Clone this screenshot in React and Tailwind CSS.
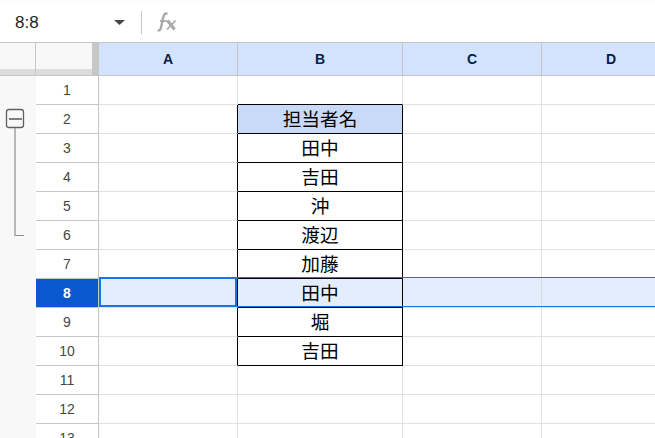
import React from 'react';

const names = { 2: '担当者名', 3: '田中', 4: '吉田', 5: '沖', 6: '渡辺', 7: '加藤', 8: '田中', 9: '堀', 10: '吉田' };
const rows = [1, 2, 3, 4, 5, 6, 7, 8, 9, 10, 11, 12, 13];
const cols = ['A', 'B', 'C', 'D'];

const GridCell = ({ col, row }) => {
    const selected = row === 8;
    const inTable = col === 'B' && names[row];
    const bg = selected ? 'bg-[#e3edfc]' : row === 2 && col === 'B' ? 'bg-[#c9daf8]' : 'bg-white';
    // right edge of column A and bottom of B1 belong to the black table outline
    const right = inTable || (col === 'A' && names[row]) ? 'border-r-black' : selected ? 'border-r-[#d3dbe8]' : 'border-r-[#e1e1e1]';
    const bottom = inTable || (col === 'B' && row === 1) ? 'border-b-black' : row === 7 ? 'border-b-[#e3edfc]' : 'border-b-[#e1e1e1]';
    return (
        <div className={`h-[29px] pt-[3px] border-r border-b ${bg} ${right} ${bottom} flex items-center justify-center text-[18.67px] leading-none text-black`}>
            {inTable ? names[row] : ''}
        </div>
    );
};

const App = () => {
    return (
        <div className="w-[655px] h-[438px] overflow-hidden bg-white font-['Liberation_Sans','Noto_Sans_CJK_JP',sans-serif]">
            <div className="h-[3px] bg-[#f9fbfd]" />
            <div className="h-[39px] flex items-center bg-white">
                <div className="w-[100px] pl-[15px] text-[17px] leading-none text-[#1f1f1f]">8:8</div>
                <svg width="11" height="5" viewBox="0 0 11 5" className="ml-[14px] mb-[1px]">
                    <path d="M0 0h11L5.5 5z" fill="#444746" />
                </svg>
                <div className="ml-[16px] mb-[1px] w-px h-[23px] bg-[#c7c7c7]" />
                <svg width="20" height="20" viewBox="0 0 20 20" fill="none" stroke="#aaaaaa" className="ml-[15px] mb-[1px]">
                    <path d="M10.5 1.8C8 0.6 6.8 2.5 6.3 5L4 15.5C3.5 18 2.2 19 0.6 18" strokeWidth="2.4" />
                    <path d="M3 9H10" strokeWidth="1.8" />
                    <path d="M10.5 8.5L17.5 17.5" strokeWidth="3.2" />
                    <path d="M18.5 8.5L10 17.5" strokeWidth="1.8" />
                </svg>
            </div>
            <div className="flex border-t border-[#c4c7c5]">
                <div className="w-[36px] shrink-0 bg-[#f8f8f8]">
                    <div className="h-[33px] border-r border-b border-[#c4c7c5] flex flex-col justify-end">
                        <div className="h-[6px] bg-[#dcdcdc]" />
                    </div>
                    <svg width="36" height="170" viewBox="0 0 36 170" className="block">
                        <rect x="6.5" y="33.5" width="17" height="18" rx="2.5" fill="#f8f8f8" stroke="#5f5f5f" strokeWidth="1.3" />
                        <path d="M9 43H22" stroke="#808080" strokeWidth="2" />
                        <path d="M15 52V159.5H24" stroke="#8f8f8f" strokeWidth="1.2" fill="none" />
                    </svg>
                </div>
                <div className="flex-1 relative grid grid-cols-[63px_139px_165px_139px_139px] grid-rows-[33px] auto-rows-[29px] content-start">
                    <div className="border-r border-b border-[#c4c7c5] bg-[#f8f8f8] flex justify-end relative">
                        <div className="w-[6px] bg-[#c7c7c7]" />
                        <div className="absolute left-0 right-[6px] bottom-0 h-[6px] bg-[#dcdcdc]" />
                    </div>
                    {cols.map((c) => (
                        <div key={c} className="border-r border-b border-[#c4c7c5] bg-[#d3e3fd] flex items-center justify-center text-[14px] font-bold text-[#041e49]">
                            {c}
                        </div>
                    ))}
                    {rows.map((r) => (
                        <React.Fragment key={r}>
                            <div className={`border-r border-b border-[#c4c7c5] flex items-center justify-center text-[14px] ${r === 8 ? 'bg-[#0b57d0] text-white font-bold' : 'bg-white text-[#444746]'}`}>
                                {r}
                            </div>
                            {cols.map((c) => (
                                <GridCell key={c} col={c} row={r} />
                            ))}
                        </React.Fragment>
                    ))}
                    {/* selection outlines over the grid */}
                    <div className="absolute left-[63px] right-0 top-[234px] h-px bg-[#1a73e8]" />
                    <div className="absolute left-[63px] right-0 top-[263px] h-px bg-[#1a73e8]" />
                    <div className="absolute left-[63px] top-[234px] w-[138px] h-[30px] border-2 border-[#1a73e8]" />
                </div>
            </div>
        </div>
    );
};

export default App;
